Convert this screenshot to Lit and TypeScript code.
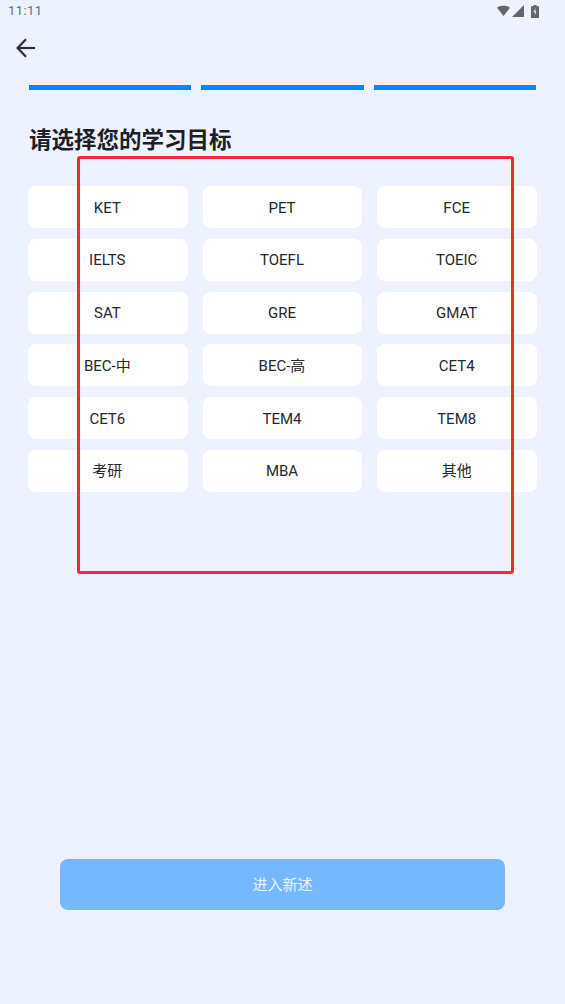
import { LitElement, html, css, svg } from "lit";
import { customElement } from "lit/decorators.js";

const GOALS = ["KET","PET","FCE","IELTS","TOEFL","TOEIC","SAT","GRE","GMAT","BEC-中","BEC-高","CET4","CET6","TEM4","TEM8","考研","MBA","其他"];

@customElement("app-root")
export class AppRoot extends LitElement {
  static styles = css`
    :host { display: block; position: relative; width: 565px; height: 1004px; overflow: hidden; background: #edf2fe;
      font-family: Roboto, "Noto Sans CJK SC", sans-serif; color: #1f2229; }
    .status { height: 22px; display: flex; align-items: center; justify-content: space-between; padding: 0 26px 0 8px; box-sizing: border-box; color: #6a6d72; font-size: 13px; line-height: 22px; letter-spacing: 0.4px; }
    .status .icons { display: flex; align-items: center; gap: 2px; height: 14px; }
    .status svg { display: block; }
    .status .signal { margin-right: 5px; }
    .nav { height: 52px; padding-left: 13px; display: flex; align-items: center; }
    .nav svg { display: block; }
    .progress { display: flex; gap: 10px; padding: 11px 29px 0; }
    .progress div { flex: 1; height: 5px; background: #0a86fb; }
    h1 { margin: 34px 0 0 29px; font-size: 22.5px; line-height: 32px; font-weight: 700; color: #1c1f26; }
    .grid { display: grid; grid-template-columns: repeat(3, 1fr); column-gap: 15px; row-gap: 10.7px; padding: 0 28px; margin-top: 30.3px; }
    .item { height: 42px; box-sizing: border-box; padding: 1px 1px 0 0; background: #fff; border-radius: 8px; display: flex; align-items: center; justify-content: center; font-size: 15px; line-height: 20px; color: #26282d; }
    .cta { position: absolute; left: 60px; top: 859px; width: 445px; height: 51px; box-sizing: border-box; padding-top: 1px; border-radius: 8px; background: #75b8ff; color: #e6f2ff; font-size: 15px; line-height: 20px; display: flex; align-items: center; justify-content: center; }
    .mark { position: absolute; left: 77px; top: 156px; width: 437px; height: 418px; box-sizing: border-box; border: 3px solid #ee2c2c; border-radius: 3px; pointer-events: none; }
  `;

  render() {
    return html`
      <div class="status">
        <span>11:11</span>
        <div class="icons">
          <svg width="13" height="12" viewBox="0 0 14 12">${svg`<path d="M0 2.5C3.5 -0.2 10.5 -0.2 14 2.5L7 11.5Z" fill="#62656a"/>`}</svg>
          <svg class="signal" width="12" height="12" viewBox="0 0 12 12">${svg`<path d="M12 0V12H0Z" fill="#62656a"/>`}</svg>
          <svg width="8" height="13" viewBox="0 0 8 13">${svg`<path d="M2.5 0H5.5V1.2H8V13H0V1.2H2.5Z" fill="#62656a"/><path d="M4.3 3 2.6 7H3.8V10.5L5.4 6.3H4.3Z" fill="#edf2fe"/>`}</svg>
        </div>
      </div>
      <div class="nav">
        <svg width="24" height="24" viewBox="0 0 24 24" fill="none" stroke="#2b2e35" stroke-width="2.2">${svg`<path d="M22 12H5"/><path d="M13 3.2 4.6 12 13 20.8" />`}</svg>
      </div>
      <div class="progress"><div></div><div></div><div></div></div>
      <h1>请选择您的学习目标</h1>
      <div class="grid">${GOALS.map((g) => html`<div class="item">${g}</div>`)}</div>
      <div class="cta">进入新述</div>
      <div class="mark"></div>
    `;
  }
}
